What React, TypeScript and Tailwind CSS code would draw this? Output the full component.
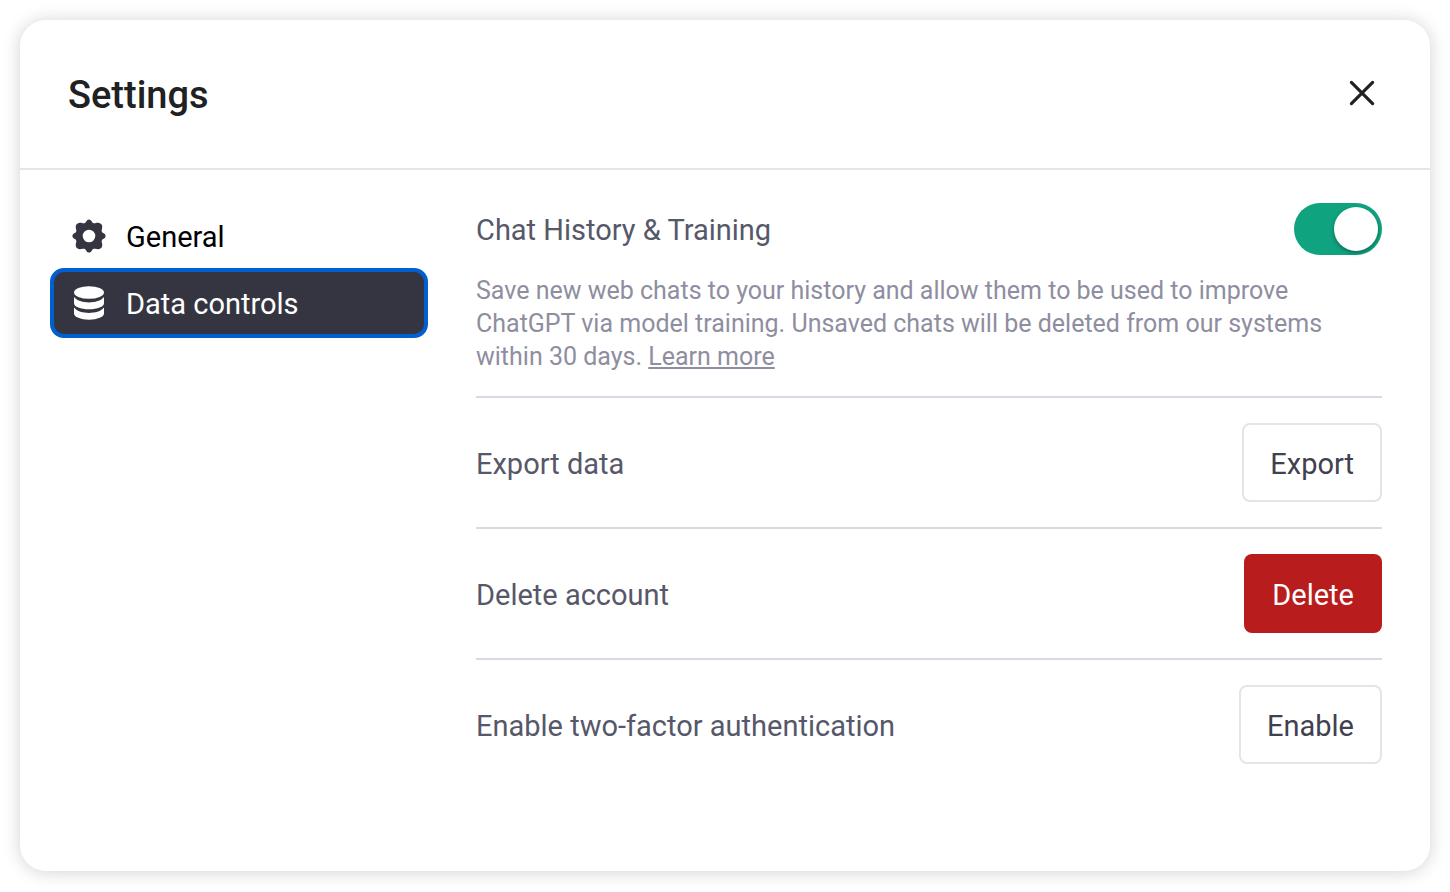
import { useState } from "react";
import type { ReactNode } from "react";

function GearIcon() {
  return (
    <svg viewBox="0 0 34 34" className="size-[34px]" fill="#343541" aria-hidden="true">
      <path
        fillRule="evenodd"
        d="M17 0.4C18.4 0.4 19.3 1.4 20 2.8C20.7 4.2 21.9 4.6 23.300 4.200C25.200 3.600 27.200 3.500 28.400 4.400Q29.300 5.100 29.600 5.600C30.500 6.800 30.400 8.800 29.800 10.700C29.400 12.100 29.800 13.300 31.200 14C32.600 14.700 33.600 15.600 33.600 17C33.600 18.400 32.600 19.300 31.200 20C29.800 20.700 29.400 21.900 29.800 23.300C30.400 25.200 30.500 27.200 29.600 28.400Q28.900 29.300 28.400 29.600C27.200 30.500 25.200 30.400 23.300 29.800C21.900 29.400 20.700 29.800 20 31.200C19.300 32.600 18.400 33.600 17 33.600C15.600 33.600 14.700 32.600 14 31.200C13.300 29.800 12.100 29.400 10.700 29.800C8.800 30.400 6.800 30.500 5.600 29.600Q4.700 28.900 4.400 28.400C3.500 27.200 3.600 25.200 4.200 23.300C4.600 21.900 4.200 20.700 2.800 20C1.400 19.300 0.400 18.400 0.400 17C0.400 15.600 1.400 14.700 2.800 14C4.200 13.300 4.600 12.100 4.200 10.700C3.600 8.800 3.500 6.800 4.400 5.600Q5.100 4.700 5.600 4.400C6.800 3.500 8.800 3.600 10.700 4.200C12.100 4.600 13.300 4.200 14 2.800C14.700 1.400 15.600 0.400 17 0.400ZM17 10.700a6.300 6.300 0 1 0 0 12.600a6.300 6.300 0 1 0 0-12.600Z"
      />
    </svg>
  );
}

function DatabaseIcon() {
  return (
    <svg viewBox="0 0 34 34" className="size-[34px]" fill="currentColor" aria-hidden="true">
      <ellipse cx="17" cy="6.500" rx="15" ry="6.300" />
      <path d="M2 11C5 14.800 11 16.400 17 16.400s12-1.600 15-5.400V17.200c0 3.400-6.700 6.100-15 6.100S2 20.600 2 17.200Z" />
      <path d="M2 21.600C5 25.400 11 27 17 27s12-1.600 15-5.400V27.600c0 3.400-6.700 6.100-15 6.100S2 31 2 27.600Z" />
    </svg>
  );
}

function Row({ label, children }: { label: string; children: ReactNode }) {
  return (
    <div className="flex items-center justify-between border-t-2 border-[#d9d9e3] py-[25px]">
      <h3 className="pt-[2px] text-[29px] leading-9">{label}</h3>
      {children}
    </div>
  );
}

export default function App() {
  const [history, setHistory] = useState(true);
  return (
    <main className="min-h-screen bg-white p-5 font-['Roboto',sans-serif] text-[#565869]">
      <section className="min-h-[851px] rounded-[26px] bg-white shadow-[0_1px_18px_rgba(0,0,0,0.18)]">
        <header className="flex items-center justify-between border-b-2 border-[#e5e5e5] px-12 pt-12 pb-[46px]">
          <h1 className="text-[38px] leading-[54px] font-medium text-[#202123]">Settings</h1>
          <button type="button" aria-label="Close" className="mr-1 pb-1">
            <svg viewBox="0 0 32 32" className="size-8" fill="none" stroke="#202123" strokeWidth="3.2" strokeLinecap="round">
              <path d="M5.400 5.400l21.200 21.200M26.600 5.400L5.400 26.600" />
            </svg>
          </button>
        </header>
        <div className="flex gap-12 pr-12 pl-[30px]">
          <nav className="flex w-[378px] shrink-0 flex-col pt-[34px]">
            <button type="button" className="flex h-16 items-center gap-5 px-[22px] text-[29px] text-black">
              <GearIcon />
              <span className="pt-[3px]">General</span>
            </button>
            <button type="button" className="flex h-[70px] items-center gap-5 rounded-[14px] border-4 border-[#0060d0] bg-[#343541] px-[18px] text-[29px] text-white">
              <DatabaseIcon />
              <span className="pt-[3px]">Data controls</span>
            </button>
          </nav>
          <div className="min-w-0 flex-1 pt-[33px]">
            <div className="flex items-center justify-between">
              <label htmlFor="history" className="pt-[2px] text-[29px] leading-[50px]">Chat History &amp; Training</label>
              <input
                id="history"
                type="checkbox"
                role="switch"
                checked={history}
                onChange={(e) => setHistory(e.target.checked)}
                className="h-[52px] w-[88px] appearance-none rounded-full bg-[#c5c5d2] p-1 before:block before:size-11 before:rounded-full before:bg-white before:shadow-[0_2px_4px_rgba(0,0,0,0.35)] checked:bg-[#10a37f] checked:before:ml-9"
              />
            </div>
            <p className="mt-[19px] mb-[23px] max-w-[860px] text-[25px] leading-[33px] text-[#8e8ea0]">
              Save new web chats to your history and allow them to be used to improve ChatGPT via model training. Unsaved chats will be deleted from our systems within 30 days. <a href="#learn" className="underline">Learn more</a>
            </p>
            <Row label="Export data">
              <button type="button" className="h-[79px] rounded-lg border-2 border-[#e5e5e5] px-[26px] pt-[5px] text-[29px] text-[#40414f]">Export</button>
            </Row>
            <Row label="Delete account">
              <button type="button" className="h-[79px] rounded-lg bg-[#b91c1c] px-7 pt-[5px] text-[29px] text-white">Delete</button>
            </Row>
            <Row label="Enable two-factor authentication">
              <button type="button" className="h-[79px] rounded-lg border-2 border-[#e5e5e5] px-[26px] pt-[5px] text-[29px] text-[#40414f]">Enable</button>
            </Row>
          </div>
        </div>
      </section>
    </main>
  );
}
